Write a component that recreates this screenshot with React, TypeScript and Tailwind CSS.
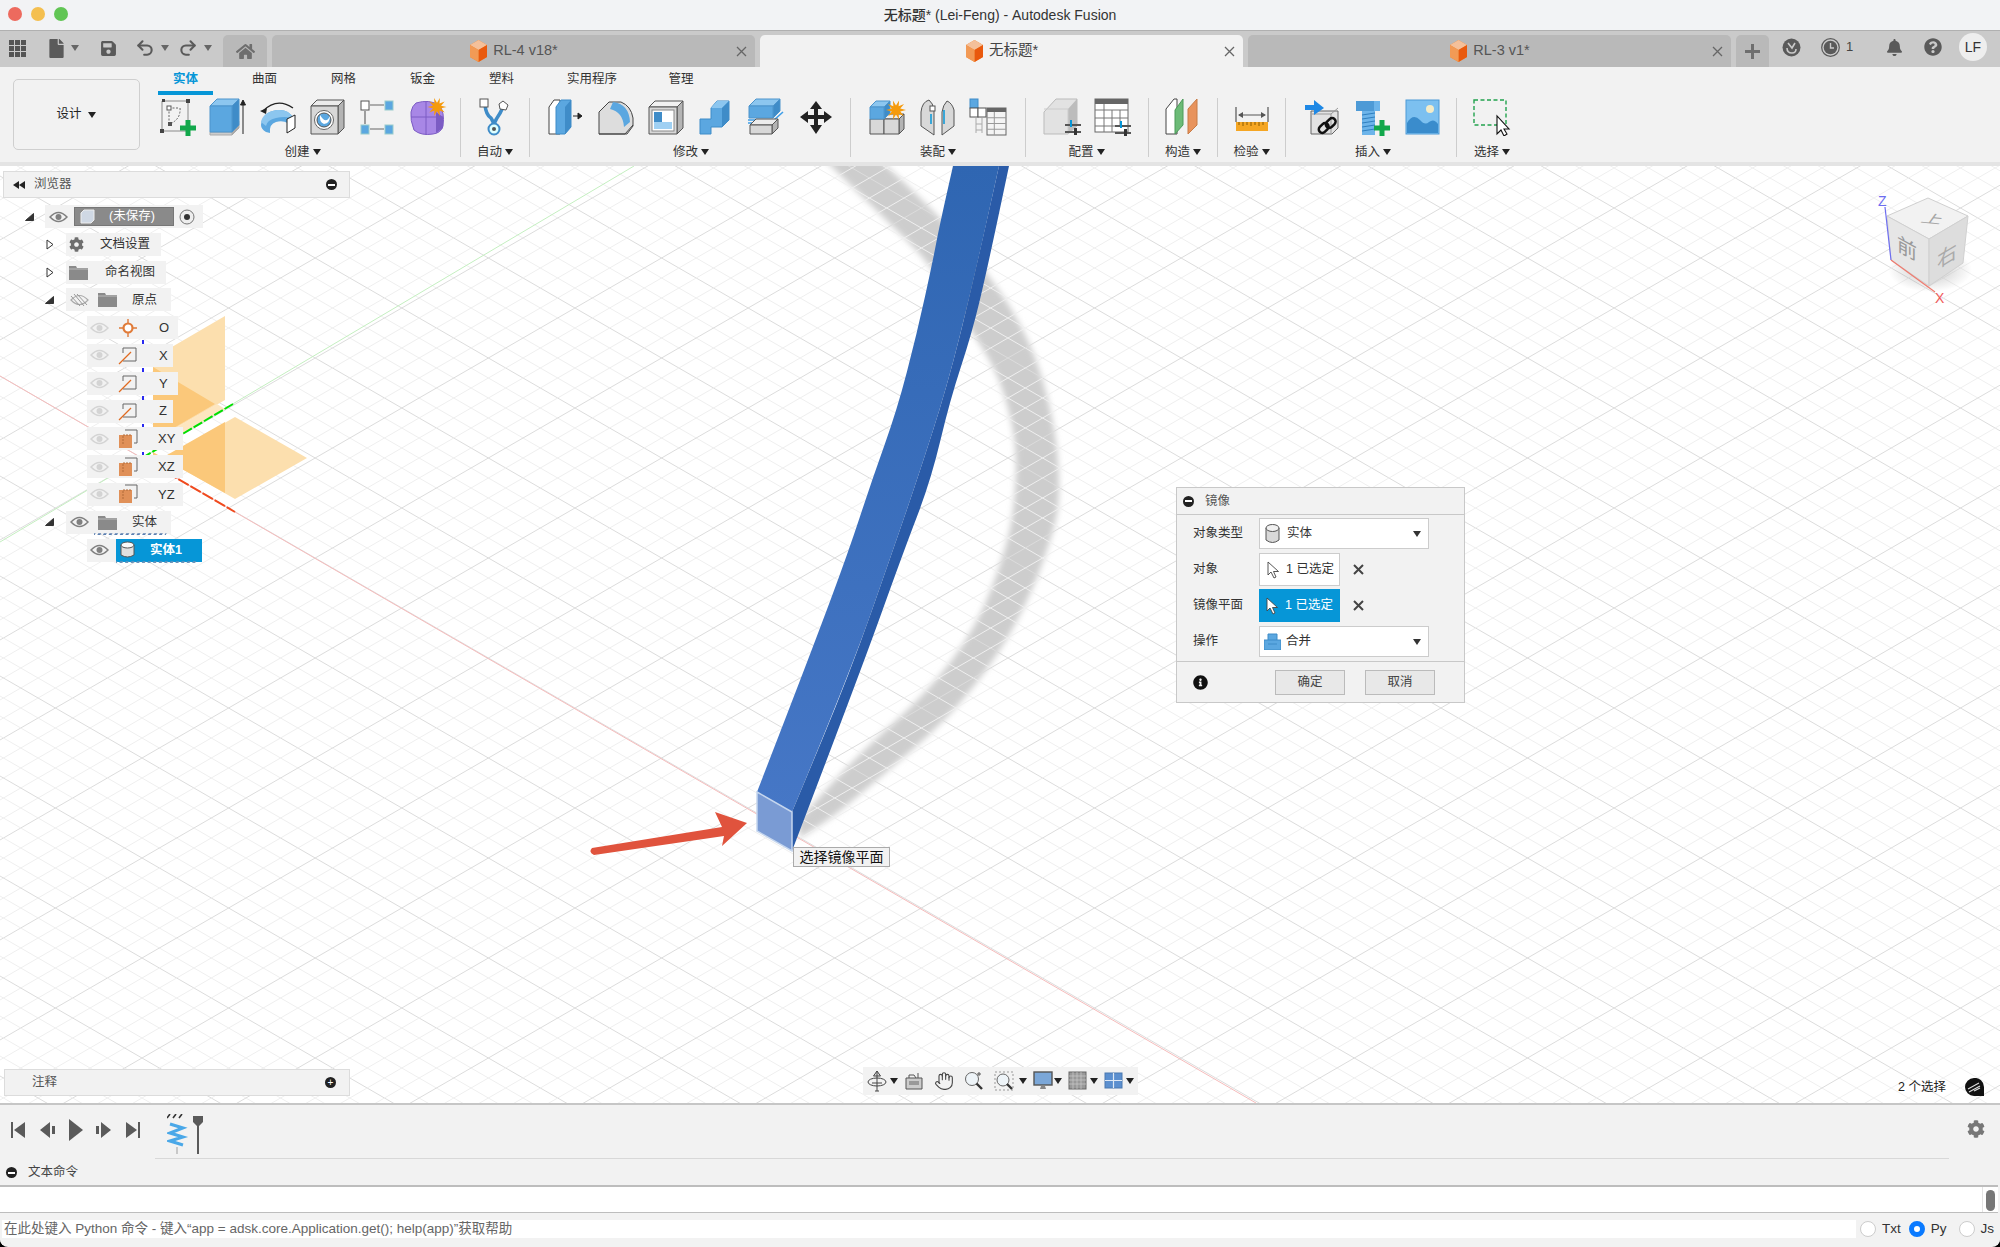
import type { ReactNode } from "react";
import { Undo2, Redo2, Hand } from "lucide-react";
import { FaCog, FaBell, FaQuestionCircle, FaHome, FaSave, FaFile, FaInfoCircle } from "react-icons/fa";

type Pt = [number, number];

// smooth path through a list of points
const curve = (pts: Pt[], start = "M") => {
  let d = `${start}${pts[0][0]} ${pts[0][1]}`;
  for (let i = 1; i < pts.length - 1; i++) {
    const mx = (pts[i][0] + pts[i + 1][0]) / 2;
    const my = (pts[i][1] + pts[i + 1][1]) / 2;
    d += ` Q${pts[i][0]} ${pts[i][1]} ${mx} ${my}`;
  }
  const last = pts[pts.length - 1];
  return d + ` L${last[0]} ${last[1]}`;
};

const leftEdge: Pt[] = [[953, 166], [940, 223], [933, 260], [917, 333], [897, 410], [872, 480], [848, 553], [813, 647], [757, 792]];
const splitEdge: Pt[] = [[999, 166], [973, 283], [947, 387], [917, 480], [893, 550], [850, 673], [792, 812]];
const rightEdge: Pt[] = [[1009, 166], [987, 270], [972, 333], [950, 400], [931, 480], [903, 553], [860, 673], [792, 851]];
const shadowOuter: Pt[] = [[880, 160], [920, 197], [960, 240], [987, 273], [1017, 317], [1040, 367], [1057, 437], [1060, 500], [1053, 533], [1033, 590], [1000, 653], [947, 720], [877, 780], [833, 817], [800, 838]];
const shadowInner: Pt[] = [[825, 160], [883, 217], [930, 263], [973, 333], [1000, 377], [1017, 443], [1015, 500], [1007, 547], [977, 627], [927, 693], [860, 753], [810, 807], [798, 822]];

const gridLines = () => {
  const m = 0.5774;
  const out: ReactNode[] = [];
  for (let k = -120; k <= 140; k++) {
    const major = k % 5 === 0;
    const c = 458 + k * 20;
    const stroke = major ? "#dcdcdc" : "#efefef";
    out.push(<line key={`a${k}`} x1={0} y1={c - m * 142} x2={2000} y2={c + m * 1858} stroke={stroke} strokeWidth={1} />);
    out.push(<line key={`b${k}`} x1={0} y1={c + m * 142} x2={2000} y2={c - m * 1858} stroke={stroke} strokeWidth={1} />);
  }
  return out;
};

const Box = ({ x, y, w, h, d, f = "#d8d8d8", t = "#ececec", r = "#b4b4b4", s = "#555" }: { x: number; y: number; w: number; h: number; d: number; f?: string; t?: string; r?: string; s?: string }) => (
  <g stroke={s} strokeWidth={1} strokeLinejoin="round">
    <path d={`M${x} ${y}h${w}l${d} ${-d}h${-w}z`} fill={t} />
    <path d={`M${x + w} ${y}l${d} ${-d}v${h}l${-d} ${d}z`} fill={r} />
    <rect x={x} y={y} width={w} height={h} fill={f} />
  </g>
);

const I = ({ children, w = 38, h = 38 }: { children: ReactNode; w?: number; h?: number }) => (
  <svg width={w} height={h} viewBox={`0 0 ${w} ${h}`} className="block">{children}</svg>
);

const blueBox = { f: "#5ba7e0", t: "#8cc6ef", r: "#3f8cc8", s: "#4d94cc" };

const Star = ({ x, y, r = 9 }: { x: number; y: number; r?: number }) => {
  const pts: string[] = [];
  for (let i = 0; i < 20; i++) {
    const a = (i * Math.PI) / 10;
    const q = i % 2 ? r * 0.45 : r;
    pts.push(`${x + q * Math.cos(a)},${y + q * Math.sin(a)}`);
  }
  return <polygon points={pts.join(" ")} fill="#f59a0c" />;
};

const GreenPlus = ({ x, y }: { x: number; y: number }) => (
  <g fill="#12a84b">
    <rect x={x + 5.5} y={y} width={5} height={16} />
    <rect x={x} y={y + 5.5} width={16} height={5} />
  </g>
);

const Sliders = ({ x, y }: { x: number; y: number }) => (
  <g>
    <rect x={x} y={y} width={16} height={2} fill="#555" />
    <rect x={x + 5} y={y - 4} width={2} height={7} fill="#0696d7" />
    <rect x={x} y={y + 7} width={16} height={2} fill="#555" />
    <rect x={x + 9} y={y + 4} width={3} height={7} fill="#333" />
  </g>
);

const TableGrid = ({ x, y, w, h }: { x: number; y: number; w: number; h: number }) => (
  <g>
    <rect x={x} y={y} width={w} height={h} fill="#f4f4f4" stroke="#666" />
    <rect x={x} y={y} width={w} height={4} fill="#666" />
    {[1, 2, 3].map((i) => <line key={i} x1={x} x2={x + w} y1={y + 4 + (i * (h - 4)) / 4} y2={y + 4 + (i * (h - 4)) / 4} stroke="#999" />)}
    <line x1={x + w / 2.6} x2={x + w / 2.6} y1={y + 4} y2={y + h} stroke="#999" />
  </g>
);

const ribbonIcons: Record<string, ReactNode> = {
  sketch: (
    <I>
      <path d="M3 3H29V33H3Z" fill="none" stroke="#8a8a8a" />
      <path d="M3 1h3v3H3zM27 1h4v4h-4zM1 31h4v4H1z" fill="#444" />
      <path d="M10 10v16M10 10h10M21 10q1 11 -10 16" fill="none" stroke="#666" strokeDasharray="2 1.5" />
      <rect x={8} y={8} width={4} height={4} fill="#fff" stroke="#555" />
      <rect x={9} y={24} width={4} height={4} fill="#555" />
      <GreenPlus x={21} y={22} />
    </I>
  ),
  extrude: (
    <I>
      <path d="M1 27h24v6l6 -6v-4" fill="#ddd" />
      <Box x={1} y={34} w={22} h={3} d={7} f="#ccc" t="#bbb" r="#aaa" s="#aaa" />
      <Box x={1} y={8} w={22} h={26} d={7} {...blueBox} />
      <path d="M34 36V3M31.5 7L34 2l2.5 5z" stroke="#222" strokeWidth={1} fill="#222" />
    </I>
  ),
  revolve: (
    <I>
      <path d="M4 13Q18 -1 34 10" fill="none" stroke="#222" strokeWidth={1.3} />
      <path d="M1 13l7 -3 -1 6z" fill="#222" />
      <path d="M2 27Q3 14 18 12Q30 11 34 20L35 31Q28 21 17 24Q10 26 11 35L7 34Q2 31 2 27Z" fill="#5ba7e0" />
      <path d="M2 24Q4 14 18 12Q30 11 34 20Q25 18 17 20Q8 22 7 28Z" fill="#8cc6ef" />
      <path d="M28 21L36 17V30L28 35Z" fill="#fff" stroke="#222" />
    </I>
  ),
  hole: (
    <I>
      <Box x={2} y={8} w={27} h={28} d={6} />
      <circle cx={15} cy={22} r={9.5} fill="#fff" stroke="#666" />
      <circle cx={15} cy={22} r={7} fill="#5ba7e0" stroke="#555" />
      <path d="M11 17q6 10 10 1q0 7 -6 8q-5 -2 -4 -9z" fill="#fff" />
    </I>
  ),
  pattern: (
    <I>
      <rect x={2} y={3} width={8} height={9} fill="#fff" stroke="#555" />
      <rect x={26} y={3} width={8} height={9} fill="#5ba7e0" stroke="#9cc" />
      <rect x={2} y={27} width={8} height={9} fill="#5ba7e0" stroke="#9cc" />
      <rect x={26} y={27} width={8} height={9} fill="#5ba7e0" stroke="#9cc" />
      <path d="M6 13v13M11 7h14M11 31h14" stroke="#666" strokeWidth={1.2} />
    </I>
  ),
  form: (
    <I>
      <path d="M7 5Q20 1 30 7Q36 14 34 28Q32 35 24 36Q12 38 5 32Q1 22 2 14Q3 8 7 5Z" fill="#a887e6" stroke="#7c5cc4" />
      <path d="M2 19H34M17 4V37" stroke="#7c5cc4" />
      <path d="M27 14L34 19V30L27 35Z" fill="#7c5cc4" />
      <Star x={28} y={9} r={9.5} />
    </I>
  ),
  auto: (
    <I>
      <path d="M9 7Q10 17 15 20Q18 24 18 30M27 9Q24 16 21 20Q18 24 18 30" fill="none" stroke="#3f8cc8" strokeWidth={3.5} />
      <rect x={4} y={1} width={8} height={8} fill="#fff" stroke="#555" />
      <path d="M27 3l5 4 -2 5 -6 -1 -1 -5z" fill="#fff" stroke="#555" />
      <circle cx={18} cy={31} r={5.5} fill="#dff" stroke="#3f8cc8" strokeWidth={2} />
      <circle cx={18} cy={31} r={2} fill="#555" />
    </I>
  ),
  press: (
    <I>
      <path d="M2 36V9L7 2H13V36Z" fill="#fff" stroke="#444" />
      <path d="M9 36V9L14 2H24V29L18 36Z" fill="#5ba7e0" stroke="#3f8cc8" />
      <path d="M9 9H18L24 2V29L18 36V9" fill="#3f8cc8" />
      <path d="M26 18H34M31 15l4 3 -4 3z" stroke="#222" fill="#222" />
    </I>
  ),
  fillet: (
    <I>
      <path d="M2 36V14L12 4H24Q34 8 36 20V28L30 36Z" fill="#ddd" stroke="#444" />
      <path d="M16 4Q32 6 33 24L27 29Q26 14 13 11Z" fill="#5ba7e0" />
      <path d="M2 36H28L36 27" fill="none" stroke="#444" />
    </I>
  ),
  shell: (
    <I>
      <Box x={2} y={9} w={28} h={27} d={6} t="#f2f2f2" />
      <rect x={5} y={12} width={22} height={21} fill="#fff" stroke="#888" />
      <path d="M7 14h8v10h10v7H7z" fill="#9fd0f3" />
      <path d="M7 14h8v10h-8z" fill="#3f8cc8" />
    </I>
  ),
  combine: (
    <I>
      <path d="M3 21H14V10L20 3H32V22L25 29H14V36H3V21Z" fill="#5ba7e0" stroke="#3f8cc8" />
      <path d="M14 10H25L32 3H20ZM3 21H14L14 21L9 21Z" fill="#8cc6ef" />
      <path d="M25 10L32 3V22L25 29Z" fill="#3f8cc8" />
    </I>
  ),
  offset: (
    <I>
      <Box x={2} y={8} w={24} h={12} d={7} {...blueBox} />
      <path d="M1 22H27L36 14M1 25H26" stroke="#3f9ee8" strokeWidth={1.6} fill="none" />
      <Box x={3} y={27} w={22} h={9} d={6} />
    </I>
  ),
  move: (
    <I>
      <path d="M19 3l6 8h-4v6h6v-4l8 6 -8 6v-4h-6v6h4l-6 9 -6 -9h4v-6h-6v4l-8 -6 8 -6v4h6v-6h-4z" fill="#222" />
    </I>
  ),
  component: (
    <I>
      <Box x={1} y={21} w={14} h={15} d={4} />
      <Box x={15} y={21} w={15} h={15} d={5} />
      <Box x={1} y={9} w={14} h={12} d={6} {...blueBox} />
      <Star x={27} y={12} r={10} />
    </I>
  ),
  joint: (
    <I>
      <path d="M2 14Q3 4 10 2Q14 5 15 12V37L2 28Z" fill="#d8d8d8" stroke="#555" />
      <path d="M35 12Q33 5 28 3Q24 7 23 14V37L35 28Z" fill="#d8d8d8" stroke="#555" />
      <rect x={11} y={8} width={5} height={5} fill="#fff" stroke="#555" />
      <path d="M12 16v10M25 12v14" stroke="#0696d7" strokeWidth={1.5} />
    </I>
  ),
  table: (
    <I>
      <rect x={1} y={1} width={8} height={9} fill="#5ba7e0" stroke="#3f8cc8" />
      <rect x={1} y={10} width={8} height={9} fill="#fff" stroke="#555" />
      <rect x={9} y={10} width={8} height={9} fill="#fff" stroke="#555" />
      <path d="M7 20V35M13 20V35M7 26h6M7 32h6" stroke="#aaa" />
      <TableGrid x={18} y={10} w={19} h={27} />
    </I>
  ),
  configCube: (
    <I>
      <path d="M1 14L13 1H34V28L25 36H1Z" fill="#e2e2e2" stroke="#bbb" />
      <path d="M25 11L34 1V28L25 36Z" fill="#bcbcbc" />
      <path d="M1 11H25V36" fill="none" stroke="#ccc" />
      <Sliders x={22} y={26} />
    </I>
  ),
  configTable: (
    <I>
      <rect x={2} y={1} width={33} height={33} fill="#fff" stroke="#666" />
      <rect x={2} y={1} width={33} height={5} fill="#666" />
      <path d="M2 12H35M2 20H35M2 28H28M11 6V34M19 12V34M27 12V27" stroke="#777" />
      <Sliders x={22} y={27} />
    </I>
  ),
  construct: (
    <I>
      <path d="M2 36V11L10 1H13V36Z" fill="#fff" stroke="#444" />
      <path d="M11 36V12L19 1V27Z" fill="#6cbb77" stroke="#4a9a58" />
      <path d="M24 36V11L33 1V27Z" fill="#e8935c" stroke="#c87b45" />
    </I>
  ),
  measure: (
    <I>
      <path d="M3 9v15M35 9v15M6 17H32" stroke="#555" strokeWidth={1.2} />
      <path d="M5 17l5 -3v6zM33 17l-5 -3v6z" fill="#555" />
      <rect x={3} y={24} width={32} height={9} fill="#f5a623" />
      <path d="M6 24v3M10 24v4M14 24v3M18 24v4M22 24v3M26 24v4M30 24v3" stroke="#8a5a00" />
    </I>
  ),
  derive: (
    <I>
      <path d="M7 13H34V30L28 36H7Z" fill="#e2e2e2" stroke="#666" />
      <path d="M8 16H27V35M27 16L34 10" fill="none" stroke="#999" />
      <path d="M1 7H10V2L20 10 10 17V12H1Z" fill="#1e88e5" />
      <g fill="none" stroke="#111" strokeWidth={2.5}>
        <rect x={14} y={27} width={11} height={7} rx={3.5} transform="rotate(-45 19 30)" />
        <rect x={21} y={22} width={11} height={7} rx={3.5} transform="rotate(-45 26 25)" />
      </g>
    </I>
  ),
  bolt: (
    <I>
      <path d="M2 3H26V13H21V37H8V13H2Z" fill="#6cb4ea" />
      <path d="M2 3H20V13H2Z" fill="#4d9ad6" />
      <path d="M8 17l13 -2M8 21l13 -2M8 25l13 -2M8 29l13 -2M8 33l13 -2" stroke="#2f7fbf" />
      <GreenPlus x={20} y={22} />
    </I>
  ),
  image: (
    <I>
      <rect x={2} y={2} width={33} height={34} fill="#7cc0f0" stroke="#4d9ad6" />
      <circle cx={26} cy={11} r={4} fill="#f4ecc8" />
      <path d="M3 35V25Q9 15 16 22Q21 28 25 24Q30 20 34 26V35Z" fill="#3a8ccc" />
    </I>
  ),
  select: (
    <I w={42}>
      <rect x={3} y={2} width={32} height={25} fill="none" stroke="#22a34e" strokeWidth={1.4} strokeDasharray="4 2.5" />
      <path d="M26 18V36L30 32L33 38L36 36L33 31H38Z" fill="#fff" stroke="#111" strokeWidth={1.1} />
    </I>
  ),
};

const Caret = ({ c = "#222" }: { c?: string }) => (
  <svg width={8} height={6} viewBox="0 0 8 6" className="shrink-0"><path d="M0 0H8L4 6Z" fill={c} /></svg>
);

const ribbonGroups = [
  { label: "创建", icons: ["sketch", "extrude", "revolve", "hole", "pattern", "form"], cls: "w-[305px] pr-[5px]" },
  { label: "自动", icons: ["auto"], cls: "w-[68px]" },
  { label: "修改", icons: ["press", "fillet", "shell", "combine", "offset", "move"], cls: "w-[310px] pl-[6px] pr-[4px]" },
  { label: "装配", icons: ["component", "joint", "table"], cls: "w-[162px] pl-[6px] pr-[6px]" },
  { label: "配置", icons: ["configCube", "configTable"], cls: "w-[111px] pl-[5px] pr-[6px]" },
  { label: "构造", icons: ["construct"], cls: "w-[68px]" },
  { label: "检验", icons: ["measure"], cls: "w-[67px]" },
  { label: "插入", icons: ["derive", "bolt", "image"], cls: "w-[160px] pl-[7px] pr-[3px]" },
  { label: "选择", icons: ["select"], cls: "w-[70px]" },
];

const ribbonTabs = [
  { label: "实体", cls: "w-[79px]", active: true },
  { label: "曲面", cls: "w-[79px]" },
  { label: "网格", cls: "w-[79px]" },
  { label: "钣金", cls: "w-[79px]" },
  { label: "塑料", cls: "w-[79px]" },
  { label: "实用程序", cls: "w-[102px]" },
  { label: "管理", cls: "w-[76px]" },
];

const OrangeCube = () => (
  <svg width={19} height={24} viewBox="0 0 19 24" className="shrink-0">
    <path d="M9.5 1L18 6V18L9.5 23L1 18V6Z" fill="#f0812c" />
    <path d="M9.5 1L18 6L9.5 11L1 6Z" fill="#f4c09a" />
    <path d="M9.5 11L18 6V18L9.5 23Z" fill="#e9590d" />
    <path d="M1 6L9.5 11V23L1 18Z" fill="#f29a55" />
  </svg>
);

const FileTab = ({ label, active }: { label: string; active?: boolean }) => (
  <div className={`relative flex h-[32px] w-[483px] items-center justify-center gap-[5px] rounded-t-[5px] text-[14.5px] ${active ? "bg-[#f2f2f2] text-[#444]" : "bg-[#b9b9b9] text-[#555]"}`}>
    <OrangeCube />
    <span>{label}</span>
    <svg width={11} height={11} viewBox="0 0 11 11" className="absolute right-[8px] top-[11px]"><path d="M1 1L10 10M10 1L1 10" stroke="#666" strokeWidth={1.3} /></svg>
  </div>
);

const Eye = ({ light }: { light?: boolean }) => (
  <svg width={19} height={12} viewBox="0 0 19 12" className="shrink-0">
    <path d="M1 6Q9.5 -3 18 6Q9.5 15 1 6Z" fill="none" stroke={light ? "#d4d4d4" : "#808080"} strokeWidth={1.5} />
    <circle cx={9.5} cy={6} r={3} fill={light ? "#d4d4d4" : "#808080"} />
  </svg>
);

const EyeOff = () => (
  <svg width={19} height={12} viewBox="0 0 19 12" className="shrink-0">
    <path d="M1 6Q9.5 -3 18 6Q9.5 15 1 6Z" fill="none" stroke="#aaa" strokeWidth={1.2} />
    <path d="M4 0L14 12M7 0L17 11M1 2L10 12" stroke="#999" />
  </svg>
);

const Folder = () => (
  <svg width={19} height={15} viewBox="0 0 19 15" className="shrink-0">
    <path d="M0 1H7L8 3H19V15H0Z" fill="#8a8a8a" />
    <path d="M0 4H19" stroke="#bbb" />
  </svg>
);

const ArrowOpen = () => (
  <svg width={8} height={11} viewBox="0 0 8 11"><path d="M1 1L7 5.5L1 10Z" fill="#fff" stroke="#333" /></svg>
);
const ArrowDown = () => (
  <svg width={9} height={8} viewBox="0 0 9 8"><path d="M8.5 0.5V7.5H0.5Z" fill="#333" stroke="#333" /></svg>
);

const Squiggle = ({ w, c = "#5b7fb0" }: { w: number; c?: string }) => (
  <svg width={w} height={4} viewBox={`0 0 ${w} 4`} className="absolute bottom-[-1px] left-0">
    <path d={`M0 3.5H${w}`} stroke={c} strokeWidth={2.5} strokeDasharray="3 2.6" transform="skewX(-30)" />
  </svg>
);

const Row = ({ indent, width, arrow, children }: { indent: "l0" | "l1" | "l2"; width: string; arrow?: "open" | "down"; children: ReactNode }) => (
  <div className="flex h-[23px] items-center">
    <div className={`flex justify-end ${indent === "l0" ? "w-[45px] pr-[11px]" : indent === "l1" ? "w-[66px] pr-[12px]" : "w-[87px]"}`}>
      {arrow === "open" ? <ArrowOpen /> : arrow === "down" ? <ArrowDown /> : null}
    </div>
    <div className={`relative flex h-[23px] items-center bg-[#f2f2f2] text-[12.5px] text-[#333] ${width}`}>{children}</div>
  </div>
);

const ObjIcon = ({ kind }: { kind: "origin" | "axis" | "plane" }) => (
  <svg width={20} height={20} viewBox="0 0 20 20" className="shrink-0">
    {kind === "origin" && (
      <>
        <path d="M10 1V19M1 10H19" stroke="#e07b39" strokeWidth={1.4} />
        <circle cx={10} cy={10} r={4.5} fill="#fff" stroke="#e07b39" strokeWidth={2.2} />
      </>
    )}
    {kind === "axis" && (
      <>
        <path d="M5 3H18V16H5" fill="none" stroke="#666" />
        <path d="M5 3V8" stroke="#666" />
        <path d="M1 19L13 7" stroke="#e06a20" strokeWidth={1.3} />
      </>
    )}
    {kind === "plane" && (
      <>
        <path d="M7 1H19V14H16" fill="none" stroke="#666" />
        <rect x={1} y={6} width={13} height={13} fill="#e09058" />
        <path d="M5 15V6M5 6H14" stroke="#b06a38" strokeDasharray="2 1" />
      </>
    )}
  </svg>
);

const originRows: { label: string; kind: "origin" | "axis" | "plane"; width: string; text: string }[] = [
  { label: "O", kind: "origin", width: "w-[91px]", text: "ml-[21px]" },
  { label: "X", kind: "axis", width: "w-[86px]", text: "ml-[21px]" },
  { label: "Y", kind: "axis", width: "w-[91px]", text: "ml-[21px]" },
  { label: "Z", kind: "axis", width: "w-[86px]", text: "ml-[21px]" },
  { label: "XY", kind: "plane", width: "w-[96px]", text: "ml-[20px]" },
  { label: "XZ", kind: "plane", width: "w-[96px]", text: "ml-[20px]" },
  { label: "YZ", kind: "plane", width: "w-[96px]", text: "ml-[20px]" },
];

const Cursor = ({ c = "#fff" }: { c?: string }) => (
  <svg width={13} height={18} viewBox="0 0 13 18" className="shrink-0">
    <path d="M1 1V14L4 11L7 17L9 16L6.5 10.5H11.5Z" fill={c} stroke="#444" strokeWidth={0.9} />
  </svg>
);

const XMark = () => (
  <svg width={11} height={11} viewBox="0 0 11 11"><path d="M1 1L10 10M10 1L1 10" stroke="#444" strokeWidth={2} /></svg>
);

const MirrorDialog = () => {
  const labelCls = "w-[82px] pl-[16px] text-[12.5px] text-[#333]";
  return (
    <div className="absolute left-[1176px] top-[321px] flex h-[216px] w-[289px] flex-col border border-[#c8c8c8] bg-[#f2f2f2]">
      <div className="flex h-[27px] items-center border-b border-[#c8c8c8] pl-[6px]">
        <span className="flex h-[11px] w-[11px] items-center justify-center rounded-full bg-[#222]"><span className="h-[2px] w-[7px] bg-white" /></span>
        <span className="ml-[11px] text-[12.5px] text-[#555]">镜像</span>
      </div>
      <div className="flex flex-col pt-[3px]">
        <div className="flex h-[31px] items-center">
          <div className={labelCls}>对象类型</div>
          <div className="flex h-[31px] w-[170px] items-center border border-[#ccc] bg-white pl-[5px] pr-[7px] text-[12.5px] text-[#333]">
            <svg width={15} height={22} viewBox="0 0 15 22"><path d="M1 5V17Q7.5 22 14 17V5" fill="#d8d8d8" stroke="#555" /><ellipse cx={7.5} cy={5} rx={6.5} ry={3.5} fill="#f0f0f0" stroke="#555" /></svg>
            <span className="ml-[7px] flex-1">实体</span>
            <Caret c="#333" />
          </div>
        </div>
        <div className="mt-[4px] flex h-[33px] items-center">
          <div className={labelCls}>对象</div>
          <div className="flex h-[33px] w-[81px] items-center border border-[#ccc] bg-white pl-[7px] text-[12.5px] text-[#333]">
            <Cursor />
            <span className="ml-[6px] whitespace-nowrap">1 已选定</span>
          </div>
          <div className="ml-[13px]"><XMark /></div>
        </div>
        <div className="mt-[3px] flex h-[33px] items-center">
          <div className={labelCls}>镜像平面</div>
          <div className="flex h-[33px] w-[81px] items-center bg-[#0696d7] pl-[7px] text-[12.5px] text-white">
            <Cursor />
            <span className="ml-[6px] whitespace-nowrap">1 已选定</span>
          </div>
          <div className="ml-[13px]"><XMark /></div>
        </div>
        <div className="mt-[4px] flex h-[31px] items-center">
          <div className={labelCls}>操作</div>
          <div className="flex h-[31px] w-[170px] items-center border border-[#ccc] bg-white pl-[4px] pr-[7px] text-[12.5px] text-[#333]">
            <svg width={17} height={17} viewBox="0 0 17 17"><path d="M0 7H4V1H13V7H17V17H0Z" fill="#5ba7e0" stroke="#3f8cc8" /><path d="M4 7H13M4 11H13" stroke="#3f8cc8" /></svg>
            <span className="ml-[5px] flex-1">合并</span>
            <Caret c="#333" />
          </div>
        </div>
      </div>
      <div className="mt-[4px] flex flex-1 items-center border-t border-[#c8c8c8] pl-[16px]">
        <FaInfoCircle size={15} color="#111" />
        <div className="ml-[67px] flex h-[25px] w-[70px] items-center justify-center border border-[#bbb] bg-[#e8e8e8] text-[12.5px] text-[#444]">确定</div>
        <div className="ml-[20px] flex h-[25px] w-[70px] items-center justify-center border border-[#bbb] bg-[#e8e8e8] text-[12.5px] text-[#444]">取消</div>
      </div>
    </div>
  );
};

const BrowserTree = () => (
  <div className="absolute left-0 top-[5px] w-[350px]">
    <div className="ml-[3px] flex h-[27px] w-[347px] items-center border border-[#dcdcdc] bg-[#f2f2f2] pl-[9px] pr-[12px] text-[12.5px] text-[#555]">
      <svg width={12} height={8} viewBox="0 0 12 8"><path d="M6 0V8L0 4ZM12 0V8L6 4Z" fill="#222" /></svg>
      <span className="ml-[9px] flex-1">浏览器</span>
      <span className="flex h-[11px] w-[11px] items-center justify-center rounded-full bg-[#222]"><span className="h-[2px] w-[7px] bg-white" /></span>
    </div>
    <div className="mt-[7px] flex flex-col gap-[4.8px]">
      <Row indent="l0" width="w-[158px]" arrow="down">
        <div className="ml-[4px]"><Eye /></div>
        <div className="ml-[6px] flex h-[19px] w-[100px] items-center border border-[#777] bg-[#8a8a8a] pl-[5px] text-[12.5px] text-white">
          <svg width={15} height={15} viewBox="0 0 15 15"><path d="M1 4L4 1H14V11L11 14H1Z" fill="#cfd8e4" stroke="#eee" /></svg>
          <span className="ml-[14px]">(未保存)</span>
        </div>
        <svg width={16} height={16} viewBox="0 0 16 16" className="ml-[5px]"><circle cx={8} cy={8} r={7} fill="#eee" stroke="#777" /><circle cx={8} cy={8} r={3} fill="#333" /></svg>
      </Row>
      <Row indent="l1" width="w-[95px]" arrow="open">
        <div className="ml-[3px]"><FaCog size={15} color="#6e6e6e" /></div>
        <span className="ml-[16px]">文档设置</span>
      </Row>
      <Row indent="l1" width="w-[100px]" arrow="open">
        <div className="ml-[3px]"><Folder /></div>
        <span className="ml-[17px]">命名视图</span>
      </Row>
      <Row indent="l1" width="w-[105px]" arrow="down">
        <div className="ml-[4px]"><EyeOff /></div>
        <div className="ml-[9px]"><Folder /></div>
        <span className="ml-[15px]">原点</span>
      </Row>
      {originRows.map((r) => (
        <Row key={r.label} indent="l2" width={r.width}>
          <div className="ml-[3px]"><Eye light /></div>
          <div className="ml-[9px]"><ObjIcon kind={r.kind} /></div>
          <span className={`${r.text} text-[13px]`}>{r.label}</span>
        </Row>
      ))}
      <Row indent="l1" width="w-[105px]" arrow="down">
        <div className="ml-[4px]"><Eye /></div>
        <div className="ml-[9px]"><Folder /></div>
        <span className="ml-[15px]">实体</span>
        <div className="absolute bottom-0 left-[28px]"><Squiggle w={74} /></div>
      </Row>
      <Row indent="l2" width="w-[115px]">
        <div className="ml-[3px]"><Eye /></div>
        <div className="relative ml-[7px] flex h-[23px] w-[86px] items-center bg-[#0696d7] pl-[4px] text-[12.5px] font-bold text-white">
          <svg width={15} height={18} viewBox="0 0 15 18"><path d="M1 4V14Q7.5 18 14 14V4" fill="#e0e0e0" stroke="#555" /><ellipse cx={7.5} cy={4} rx={6.5} ry={3} fill="#fafafa" stroke="#555" /></svg>
          <span className="ml-[15px]">实体1</span>
          <Squiggle w={84} c="#6c93b8" />
        </div>
      </Row>
    </div>
  </div>
);

const ViewCube = () => (
  <g>
    <defs>
      <radialGradient id="cubeShadow"><stop offset="0" stopColor="#999" stopOpacity={0.55} /><stop offset="1" stopColor="#999" stopOpacity={0} /></radialGradient>
    </defs>
    <ellipse cx={1930} cy={270} rx={42} ry={22} fill="url(#cubeShadow)" />
    <path d="M1928 198L1968 216L1929 239L1887 216Z" fill="#f2f2f2" stroke="#d0d0d0" />
    <path d="M1887 216L1929 239V286L1891 260Z" fill="#e6e6e6" stroke="#d0d0d0" />
    <path d="M1968 216L1929 239V286L1963 263Z" fill="#dddddd" stroke="#d0d0d0" />
    <text transform="matrix(1 0.1 -0.4 0.55 1920 222)" fontSize={20} fill="#a5a5a5">上</text>
    <text transform="matrix(1 0.55 0 1 1897 250)" fontSize={20} fill="#999">前</text>
    <text transform="matrix(1 -0.6 0 1 1937 269)" fontSize={20} fill="#aaa">右</text>
    <path d="M1885 207L1891 260" stroke="#6d6df0" strokeWidth={1.2} />
    <path d="M1891 260L1935 292" stroke="#ef7b6f" strokeWidth={1.2} />
    <text x={1878} y={206} fontSize={14} fill="#6d6df0">Z</text>
    <text x={1935} y={303} fontSize={14} fill="#f15b5b">X</text>
  </g>
);

const Scene = () => (
  <svg width={2000} height={937} viewBox="0 166 2000 937" className="absolute left-0 top-0">
    <defs>
      <filter id="shadowBlur" x="-10%" y="-10%" width="120%" height="120%"><feGaussianBlur stdDeviation="3" /></filter>
      <linearGradient id="bodyFront" x1="0" y1="0" x2="0" y2="1"><stop offset="0" stopColor="#2f66b2" /><stop offset="1" stopColor="#4677c6" /></linearGradient>
    </defs>
    <rect x={0} y={166} width={2000} height={937} fill="#fff" />
    <path d={`${curve(shadowOuter)} ${curve([...shadowInner].reverse(), "L")} Z`} fill="#cdcdcd" filter="url(#shadowBlur)" />
    {gridLines()}
    {/* axes */}
    <line x1={0} y1={376} x2={1256} y2={1103} stroke="#f6bcbc" strokeWidth={1} />
    <line x1={0} y1={542} x2={634} y2={166} stroke="#c4efc0" strokeWidth={1} />
    {/* origin planes */}
    <polygon points="225,316 225,400 153,441 153,358" fill="#fcdfae" />
    <polygon points="153,367 178,382 215,404 153,440" fill="#fbc87a" />
    <polygon points="153,441 217,404 225,409 153,451" fill="#fde6c0" />
    <polygon points="235,417 307,458 235,499 163,458" fill="#fcdfae" />
    <polygon points="225,422 225,493 180,468 153,452 153,463" fill="#fbc87a" />
    <line x1={143} y1={340} x2={143} y2={458} stroke="#2a2af0" strokeWidth={2} strokeDasharray="5 23" />
    <line x1={142} y1={458} x2={233} y2={404} stroke="#00e000" strokeWidth={2} strokeDasharray="10 2" />
    <line x1={142} y1={458} x2={235} y2={512} stroke="#f04a1e" strokeWidth={2} strokeDasharray="12 2" />
    {/* mirrored body */}
    <path d={`${curve(leftEdge)} L792 812 ${curve([...splitEdge].reverse(), "L")} Z`} fill="url(#bodyFront)" />
    <path d={`${curve(splitEdge)} L792 851 ${curve([...rightEdge].reverse(), "L")} Z`} fill="#2a5ba8" />
    <polygon points="757,792 792,812 792,851 757,831" fill="#7a9bd4" stroke="#c5d6ee" strokeWidth={1.5} />
    {/* red arrow */}
    <path d="M592 848L722 827L715 812L747 823L722 846L724 836L594 855Q588 852 592 848Z" fill="#e0533d" />
    <ViewCube />
  </svg>
);

const NavBar = () => (
  <div className="absolute left-[863px] top-[901px] flex h-[28px] w-[275px] items-center bg-[#f2f2f2]">
    <svg width={20} height={22} viewBox="0 0 20 22" className="ml-[4px]"><path d="M10 1V21M10 1L6.5 6H13.5ZM5 13H15M8 21H12" stroke="#444" fill="#ddd" /><ellipse cx={10} cy={12} rx={9} ry={4} fill="none" stroke="#444" /></svg>
    <div className="ml-[3px]"><Caret /></div>
    <svg width={20} height={18} viewBox="0 0 20 18" className="ml-[6px]"><path d="M2 6H18V17H2Z" fill="#ccc" stroke="#555" /><path d="M5 6V3H10L12 6M14 6V1" fill="none" stroke="#555" /><rect x={5} y={9} width={10} height={4} fill="#999" /></svg>
    <div className="ml-[10px]"><Hand size={20} color="#444" strokeWidth={1.3} /></div>
    <svg width={20} height={20} viewBox="0 0 20 20" className="ml-[10px]"><circle cx={8} cy={8} r={6.5} fill="#eef4f8" stroke="#666" /><path d="M12.5 12.5L18 18" stroke="#333" strokeWidth={2.4} /><path d="M15 1V5M13 3H17" stroke="#555" /></svg>
    <svg width={20} height={20} viewBox="0 0 20 20" className="ml-[10px]"><rect x={1} y={1} width={18} height={18} fill="none" stroke="#999" strokeDasharray="2 2" /><circle cx={9} cy={9} r={6} fill="#eef4f8" stroke="#666" /><path d="M13 13L18 18" stroke="#333" strokeWidth={2.4} /></svg>
    <div className="ml-[5px]"><Caret /></div>
    <svg width={20} height={20} viewBox="0 0 20 20" className="ml-[6px]"><rect x={1} y={1} width={18} height={13} fill="#7ba7d8" stroke="#555" strokeWidth={1.4} /><path d="M8 15H12L13 18H7Z" fill="#888" /></svg>
    <div className="ml-[1px]"><Caret /></div>
    <svg width={20} height={20} viewBox="0 0 20 20" className="ml-[6px]"><rect x={1} y={1} width={17} height={17} fill="#999" stroke="#666" /><path d="M5 1V18M9 1V18M13 1V18M1 5H18M1 9H18M1 13H18" stroke="#ccc" strokeWidth={0.7} /></svg>
    <div className="ml-[2px]"><Caret /></div>
    <svg width={20} height={20} viewBox="0 0 20 20" className="ml-[6px]"><rect x={1} y={2} width={17} height={15} fill="#5b8fcf" stroke="#4a78b0" /><path d="M9.5 2V17M1 9.5H18" stroke="#dfe9f5" strokeWidth={1.2} /></svg>
    <div className="ml-[2px]"><Caret /></div>
  </div>
);

const ToolbarCaret = () => <Caret c="#666" />;

const App = () => (
  <div className="h-[1247px] w-[2000px] bg-black font-['Liberation_Sans','Noto_Sans_CJK_SC',sans-serif]">
    <div className="flex h-[1247px] w-[2000px] flex-col overflow-hidden rounded-b-[8px] bg-[#f2f2f2]">
      {/* title bar */}
      <div className="relative flex h-[31px] shrink-0 items-center justify-center border-b border-[#b0b0b0] bg-[#f2f3f5]">
        <div className="absolute left-[8px] top-[7px] flex gap-[9px]">
          <span className="h-[14px] w-[14px] rounded-full bg-[#ed6a5e]" />
          <span className="h-[14px] w-[14px] rounded-full bg-[#f4bf4f]" />
          <span className="h-[14px] w-[14px] rounded-full bg-[#61c554]" />
        </div>
        <span className="text-[14px] font-medium text-[#333]">无标题* (Lei-Feng) - Autodesk Fusion</span>
      </div>
      {/* tab strip */}
      <div className="flex h-[36px] shrink-0 items-end bg-[#cacaca]">
        <div className="flex h-[36px] w-[223px] items-center pb-[2px]">
          <svg width={17} height={17} viewBox="0 0 17 17" className="ml-[9px]"><path d="M0 0h5v5H0zM6 0h5v5H6zM12 0h5v5h-5zM0 6h5v5H0zM6 6h5v5H6zM12 6h5v5h-5zM0 12h5v5H0zM6 12h5v5H6zM12 12h5v5h-5z" fill="#555" /></svg>
          <div className="ml-[21px]"><FaFile size={19} color="#5a5a5a" /></div>
          <div className="ml-[5px]"><ToolbarCaret /></div>
          <div className="ml-[21px]"><FaSave size={17} color="#5a5a5a" /></div>
          <div className="ml-[18px]"><Undo2 size={20} color="#5a5a5a" strokeWidth={2.5} /></div>
          <div className="ml-[6px]"><ToolbarCaret /></div>
          <div className="ml-[9px]"><Redo2 size={20} color="#5a5a5a" strokeWidth={2.5} /></div>
          <div className="ml-[6px]"><ToolbarCaret /></div>
        </div>
        <div className="flex h-[32px] w-[44px] items-center justify-center rounded-t-[5px] bg-[#b9b9b9]"><FaHome size={19} color="#6e6e6e" /></div>
        <div className="ml-[5px]"><FileTab label="RL-4 v18*" /></div>
        <div className="ml-[5px]"><FileTab label="无标题*" active /></div>
        <div className="ml-[5px]"><FileTab label="RL-3 v1*" /></div>
        <div className="ml-[5px] flex h-[32px] w-[33px] items-center justify-center rounded-t-[5px] bg-[#b9b9b9]">
          <svg width={15} height={15} viewBox="0 0 15 15"><path d="M6 0h3v6h6v3H9v6H6V9H0V6h6z" fill="#6e6e6e" /></svg>
        </div>
        <div className="flex h-[36px] items-center pb-[4px]">
          <svg width={19} height={19} viewBox="0 0 19 19" className="ml-[13px]"><circle cx={9.5} cy={9.5} r={9} fill="#5a5a5a" /><path d="M6 5L10 10L13 5M5 10Q5 15 10 15Q14 15 14 11" fill="none" stroke="#cacaca" strokeWidth={1.6} /></svg>
          <svg width={19} height={19} viewBox="0 0 19 19" className="ml-[20px]"><circle cx={9.5} cy={9.5} r={8.8} fill="none" stroke="#5a5a5a" strokeWidth={1.2} /><circle cx={9.5} cy={9.5} r={6.8} fill="#5a5a5a" /><path d="M9.5 5V10H13" fill="none" stroke="#cacaca" strokeWidth={1.4} /></svg>
          <span className="ml-[6px] w-[40px] text-[13px] text-[#444]">1</span>
          <FaBell size={17} color="#5a5a5a" />
          <div className="ml-[21px]"><FaQuestionCircle size={18} color="#5a5a5a" /></div>
          <div className="ml-[17px] flex h-[28px] w-[28px] items-center justify-center rounded-full bg-[#eeeeee] text-[14px] text-[#333]">LF</div>
        </div>
      </div>
      {/* ribbon */}
      <div className="flex h-[95px] shrink-0 items-start bg-[#f2f2f2]">
        <div className="ml-[12.5px] mt-[12px] flex h-[71px] w-[127px] items-center justify-center gap-[6px] rounded-[5px] border border-[#cfcfcf] text-[12.5px] text-[#222]">
          <span>设计</span>
          <Caret />
        </div>
        <div className="ml-[6.5px] flex flex-col">
          <div className="flex h-[28px]">
            {ribbonTabs.map((t) => (
              <div key={t.label} className={`flex h-[28px] flex-col items-center ${t.cls}`}>
                <span className={`flex h-[24px] items-center text-[12.5px] ${t.active ? "font-bold text-[#0696d7]" : "text-[#333]"}`}>{t.label}</span>
                {t.active && <span className="h-[4px] w-[55px] bg-[#0696d7]" />}
              </div>
            ))}
          </div>
          <div className="ml-[4px] mt-[3px] flex">
            {ribbonGroups.map((g, i) => (
              <div key={g.label} className={`flex h-[59px] flex-col items-center ${g.cls} ${i < ribbonGroups.length - 1 ? "border-r border-[#cdcdcd]" : ""} box-content`}>
                <div className="flex h-[38px]">
                  {g.icons.map((name) => (
                    <div key={name} className="flex w-[50px] justify-center">{ribbonIcons[name]}</div>
                  ))}
                </div>
                <div className="mt-[7px] flex items-center gap-[3px] text-[12.5px] text-[#333]">
                  <span>{g.label}</span>
                  <Caret />
                </div>
              </div>
            ))}
          </div>
        </div>
      </div>
      <div className="h-[4px] shrink-0 bg-[#e4e4e4]" />
      {/* viewport */}
      <div className="relative h-[937px] shrink-0 overflow-hidden bg-white">
        <Scene />
        <BrowserTree />
        <MirrorDialog />
        <div className="absolute left-[793px] top-[681px] flex h-[20px] w-[97px] items-center justify-center border border-[#aaa] bg-[#f2f2f2] text-[14px] text-[#111]">选择镜像平面</div>
        <div className="absolute left-[4px] top-[903px] flex h-[27px] w-[346px] items-center justify-between border border-[#dcdcdc] bg-[#f2f2f2] pl-[27px] pr-[13px] text-[12.5px] text-[#555]">
          <span>注释</span>
          <span className="flex h-[11px] w-[11px] items-center justify-center rounded-full bg-[#222] text-[10px] leading-none text-white">+</span>
        </div>
        <NavBar />
        <div className="absolute left-[1898px] top-[912px] flex items-center text-[12.5px] text-[#222]">
          <span>2 个选择</span>
          <svg width={20} height={18} viewBox="0 0 20 18" className="ml-[19px]"><path d="M9 0A9 9 0 1 0 9 18H19V9A9 9 0 0 0 9 0Z" fill="#111" /><path d="M3 11L14 5M4 14L15 8M9 13L15 10" stroke="#ddd" strokeWidth={1.2} /></svg>
        </div>
      </div>
      {/* timeline */}
      <div className="flex h-[142px] shrink-0 flex-col border-t-2 border-[#c6c6c6] bg-[#f2f2f2]">
        <div className="flex h-[54px]">
          <div className="flex w-[155px] items-center pb-[5px]">
            <svg width={14} height={16} viewBox="0 0 14 16" className="ml-[11px]"><path d="M0 0H2V16H0ZM14 0V16L3 8Z" fill="#5a5a5a" /></svg>
            <svg width={15} height={16} viewBox="0 0 15 16" className="ml-[15px]"><path d="M10 0V16L0 8ZM12 4H15V12H12Z" fill="#5a5a5a" /></svg>
            <svg width={14} height={22} viewBox="0 0 14 22" className="ml-[14px]"><path d="M0 0L14 11L0 22Z" fill="#5a5a5a" /></svg>
            <svg width={15} height={16} viewBox="0 0 15 16" className="ml-[13px]"><path d="M5 0V16L15 8ZM0 4H3V12H0Z" fill="#5a5a5a" /></svg>
            <svg width={14} height={16} viewBox="0 0 14 16" className="ml-[15px]"><path d="M12 0H14V16H12ZM0 0V16L11 8Z" fill="#5a5a5a" /></svg>
          </div>
          <div className="flex w-[1794px] border-b border-[#d8d8d8]">
            <svg width={40} height={42} viewBox="0 0 40 42" className="ml-[12px] mt-[9px]">
              <path d="M0 4L3 0M6 4L9 0M12 4L15 0" stroke="#333" strokeWidth={1.6} />
              <path d="M24 2H36V8L31 13L26 8V2Z" fill="#5a5a5a" />
              <path d="M31 10V40" stroke="#5a5a5a" strokeWidth={2} />
              <path d="M3 10L16 14L3 19L16 23L3 27L16 31" fill="none" stroke="#4aa8e8" strokeWidth={3} />
              <path d="M10 33V40" stroke="#c8c8c8" strokeWidth={2} />
            </svg>
          </div>
          <div className="flex flex-1 items-center pb-[6px] pl-[18px]"><FaCog size={18} color="#777" /></div>
        </div>
        <div className="flex h-[26px] shrink-0 items-center pl-[6px] pt-[1px] text-[12.5px] text-[#444]">
          <span className="flex h-[11px] w-[11px] items-center justify-center rounded-full bg-[#222]"><span className="h-[2px] w-[7px] bg-white" /></span>
          <span className="ml-[11px]">文本命令</span>
        </div>
        <div className="mr-[2px] flex h-[28px] shrink-0 justify-end border-y border-t-[2px] border-[#bdbdbd] bg-white">
          <div className="flex w-[16px] justify-center border-l border-[#e4e4e4] pt-[3px]"><span className="h-[21px] w-[9px] rounded-full bg-[#777]" /></div>
        </div>
        <div className="mt-[7px] flex h-[18px] shrink-0 items-center">
          <div className="ml-[2px] flex h-[18px] w-[1854px] items-center bg-white pl-[2px] text-[13.5px] text-[#666]">在此处键入 Python 命令 - 键入“app = adsk.core.Application.get(); help(app)”获取帮助</div>
          <span className="ml-[4px] h-[16px] w-[16px] rounded-full border border-[#ccc] bg-white" />
          <span className="ml-[6px] text-[13.5px] text-[#333]">Txt</span>
          <span className="ml-[8px] h-[16px] w-[16px] rounded-full border-[5px] border-[#0a7aff] bg-white" />
          <span className="ml-[6px] text-[13.5px] text-[#333]">Py</span>
          <span className="ml-[12px] h-[16px] w-[16px] rounded-full border border-[#ccc] bg-white" />
          <span className="ml-[6px] text-[13.5px] text-[#333]">Js</span>
        </div>
      </div>
    </div>
  </div>
);

export default App;
